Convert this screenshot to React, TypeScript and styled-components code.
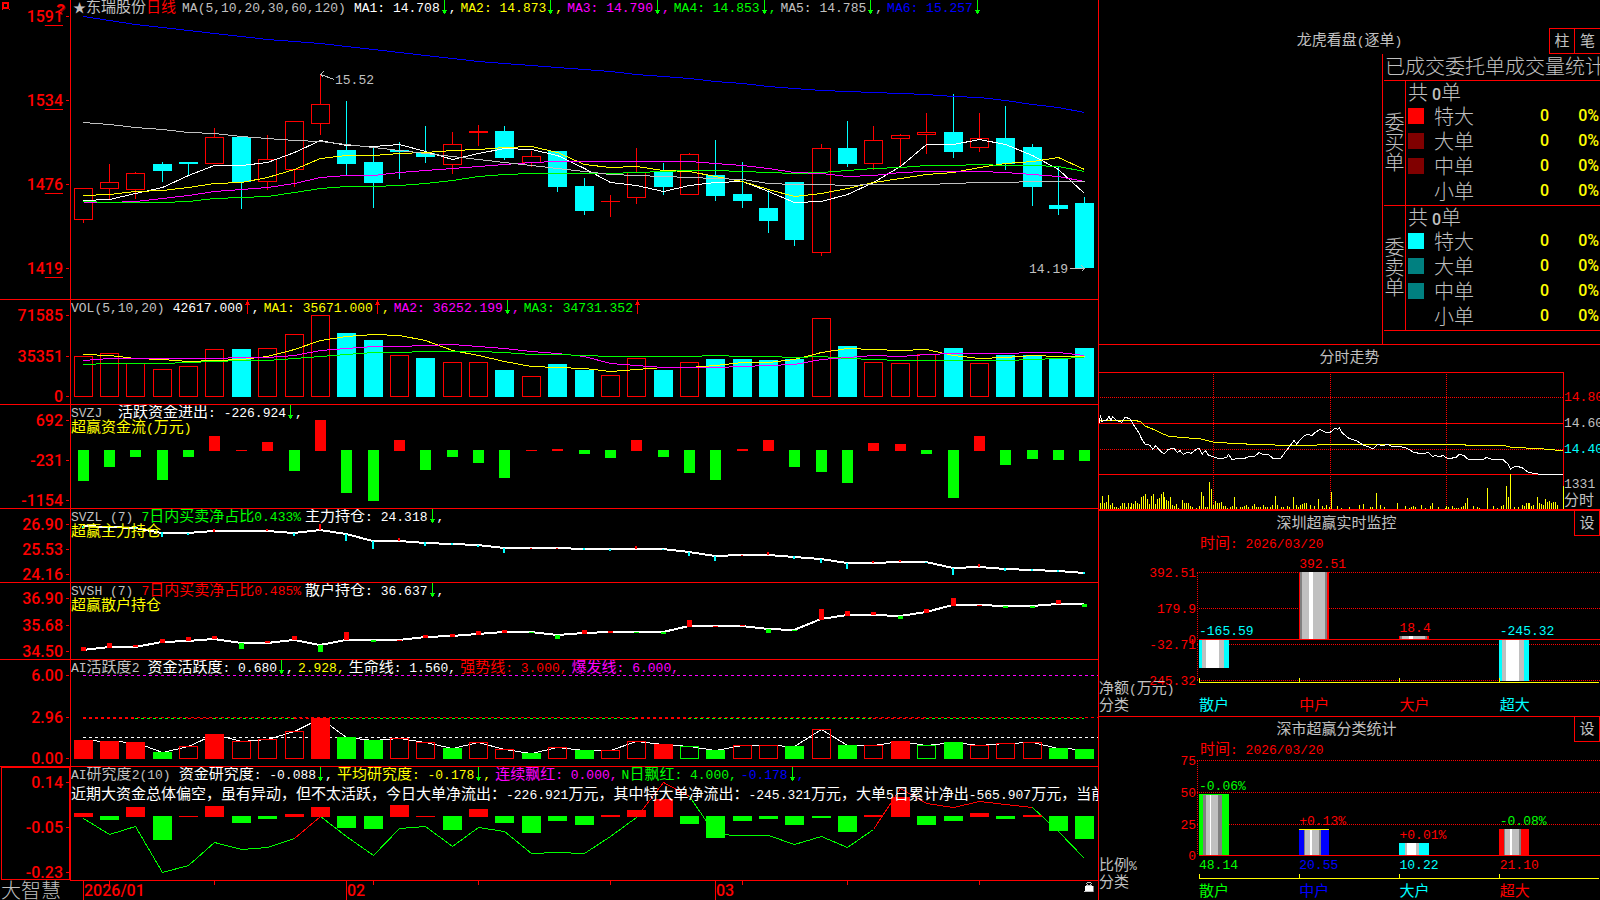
import React from "react";
import styled, { createGlobalStyle, css } from "styled-components";

const RED = "#ff0000";
const CYAN = "#00ffff";
const GREEN = "#00ff00";
const YELLOW = "#ffff00";
const MAGENTA = "#ff00ff";
const BLUE = "#0000ff";
const WHITE = "#ffffff";
const GRAY = "#c0c0c0";
const DIM = "#808080";

const Global = createGlobalStyle`
  * { box-sizing: border-box; }
  body {
    margin: 0;
    background: #000;
    color: ${GRAY};
    font: 13px/17px "Liberation Mono", "Noto Sans CJK SC", monospace;
    overflow: hidden;
  }
`;

/* ---------- text ---------- */

const Cjk = styled.span`
  font-family: "Noto Sans CJK SC", sans-serif;
  font-size: 15px;
  line-height: 0;
`;

/** Ideographs are set two pixels larger than the monospaced digits beside them. */
function Mixed({ text }: { text: string }) {
  const parts = text.split(/([\u3000-\u9fff\uff00-\uffef]+)/).filter(Boolean);
  return (
    <>
      {parts.map((p, i) =>
        /[\u3000-\u9fff\uff00-\uffef]/.test(p) ? <Cjk key={i}>{p}</Cjk> : <React.Fragment key={i}>{p}</React.Fragment>
      )}
    </>
  );
}

/* ---------- page frame ---------- */

const Screen = styled.main`
  display: grid;
  grid-template-columns: minmax(0, 1099fr) minmax(0, 501fr);
  height: 100vh;
  min-height: 640px;
`;

const Left = styled.div`
  display: grid;
  grid-template-rows: 300fr 105fr 104fr 74fr 77fr 107fr 114fr 19fr;
  min-height: 0;
  border-right: 1px solid ${RED};
`;

const Right = styled.div`
  display: grid;
  grid-template-rows: 345fr 166fr 206fr 183fr;
  min-height: 0;
`;

const Panel = styled.section`
  display: grid;
  grid-template-columns: 71px minmax(0, 1fr);
  grid-template-rows: minmax(0, 1fr);
  min-height: 0;
  position: relative;
`;

const Gutter = styled.div<{ $last?: boolean }>`
  display: grid;
  border-right: 1px solid ${RED};
  border-bottom: ${(p) => (p.$last ? "0" : `1px solid ${RED}`)};
  ${(p) => p.$last && css`padding-bottom: 1px;`}
`;

const Scale = styled.ul<{ $tall?: boolean; $focus?: boolean }>`
  display: flex;
  flex-direction: column;
  justify-content: space-between;
  list-style: none;
  margin: 0 0 0 1px;
  padding: ${(p) => (p.$tall ? "11px 0 25px" : "10px 0 2px")};
  border: 1px solid ${(p) => (p.$focus ? RED : "transparent")};
  color: ${RED};
  font: 500 16px/9px Roboto, sans-serif;
`;

const Tick = styled.li`
  display: flex;
  justify-content: flex-end;
  align-items: center;
  gap: 3px;
  height: 9px;
  &::after {
    content: "";
    width: 3px;
    height: 1px;
    background: ${RED};
  }
`;

const Cents = styled.span`
  text-decoration: underline 1px;
  text-underline-offset: 3px;
`;

const Plot = styled.div`
  display: grid;
  grid-template: minmax(0, 1fr) / minmax(0, 1fr);
  min-height: 0;
  border-bottom: 1px solid ${RED};
  overflow: hidden;
  position: relative;
  > * { grid-area: 1 / 1; }
`;

const Drawing = styled.svg`
  display: block;
  width: 100%;
  height: 100%;
  shape-rendering: crispEdges;
`;

const Overlay = styled.div`
  display: flex;
  flex-direction: column;
  align-items: flex-start;
  z-index: 1;
`;

const Legend = styled.div`
  display: flex;
  gap: 4px;
  height: 17px;
  white-space: pre;
`;

const Item = styled.span<{ $c?: string; $name?: boolean }>`
  display: inline-flex;
  align-items: center;
  color: ${(p) => p.$c || GRAY};
  padding-right: ${(p) => (p.$name ? "4px" : "0")};
`;

const Note = styled.p<{ $c: string; $gap?: boolean }>`
  margin: ${(p) => (p.$gap ? "3px 0 0" : "-2px 0 0")};
  color: ${(p) => p.$c};
  white-space: nowrap;
`;

const Text = styled.span`
  white-space: pre;
`;

const ArrowIcon = styled.svg`
  width: 9px;
  height: 14px;
  flex: none;
  align-self: flex-start;
  shape-rendering: crispEdges;
`;

function Arrow({ up }: { up?: boolean }) {
  return (
    <ArrowIcon viewBox="0 0 9 14" fill={up ? RED : GREEN} aria-hidden="true">
      {up ? (
        <path d="M4 0h1v14h-1zM3 2h3v2h-3zM2 4h5v1h-5z" />
      ) : (
        <path d="M4 0h1v14h-1zM3 11h3v2h-3zM2 10h5v1h-5z" />
      )}
    </ArrowIcon>
  );
}

type Leg = { t: string; c: string; a?: "up" | "down"; end?: string };

function Legends({ name, items }: { name: React.ReactNode; items: Leg[] }) {
  return (
    <Legend>
      {name}
      {items.map((it, i) => (
        <Item key={i} $c={it.c}>
          <Text><Mixed text={it.t} /></Text>
          {it.a && <Arrow up={it.a === "up"} />}
          <Text>{it.end ?? ","}</Text>
        </Item>
      ))}
    </Legend>
  );
}

function Name({ text }: { text: string }) {
  return <Item $name><Text><Mixed text={text} /></Text></Item>;
}

/* ---------- series ---------- */

const X = [
  83, 109, 135, 162, 188, 214, 241, 267, 294, 320, 346, 373, 399, 425, 452, 478, 504, 531, 557, 584,
  610, 636, 663, 689, 715, 742, 768, 794, 821, 847, 873, 900, 926, 953, 979, 1005, 1032, 1058, 1084,
];

/* kind, high, open/close box top, box bottom, low */
const CANDLES: [string, number, number, number, number][] = [
  ["r", 188, 188, 220, 223], ["r", 164, 182, 189, 199], ["r", 172, 173, 190, 199], ["c", 162, 164, 171, 182],
  ["c", 162, 162, 164, 175], ["r", 128, 137, 164, 164], ["c", 137, 137, 182, 209], ["r", 135, 159, 182, 190],
  ["r", 121, 121, 170, 187], ["r", 75, 104, 124, 135], ["c", 101, 150, 164, 175], ["c", 148, 162, 183, 208],
  ["c", 142, 150, 152, 179], ["c", 126, 153, 157, 163], ["r", 132, 144, 165, 174], ["r", 125, 131, 133, 146],
  ["c", 126, 131, 158, 160], ["r", 151, 156, 163, 167], ["c", 151, 151, 187, 192], ["c", 178, 186, 211, 215],
  ["r", 195, 201, 202, 217], ["r", 148, 172, 198, 204], ["c", 163, 171, 187, 195], ["r", 153, 154, 195, 195],
  ["c", 140, 175, 196, 201], ["c", 162, 194, 201, 208], ["c", 189, 208, 221, 233], ["c", 182, 182, 240, 246],
  ["r", 144, 148, 253, 256], ["c", 121, 148, 164, 167], ["r", 126, 140, 164, 170], ["r", 134, 135, 139, 167],
  ["r", 113, 132, 135, 154], ["c", 94, 132, 152, 158], ["r", 113, 138, 148, 152], ["c", 106, 138, 164, 170],
  ["c", 144, 147, 187, 206], ["c", 167, 205, 209, 215], ["c", 197, 203, 268, 268],
];

const MA: [string, number[]][] = [
  [WHITE, [200, 199, 193, 187, 175, 165, 165, 162, 152, 140, 145, 146, 144, 151, 159, 153, 148, 149, 155, 168, 182, 185, 191, 185, 182, 181, 191, 202, 201, 194, 182, 166, 144, 144, 139, 144, 155, 169, 193]],
  [YELLOW, [195, 194, 191, 190, 187, 183, 182, 177, 169, 158, 155, 155, 153, 152, 150, 149, 147, 146, 152, 164, 167, 166, 170, 171, 176, 181, 189, 196, 193, 188, 182, 178, 174, 172, 167, 163, 161, 157, 169]],
  [MAGENTA, [202, 202, 201, 198, 195, 191, 189, 187, 183, 177, 175, 175, 172, 170, 168, 166, 164, 162, 161, 161, 161, 161, 161, 161, 163, 165, 168, 172, 173, 176, 175, 172, 171, 171, 171, 172, 174, 176, 181]],
  [GREEN, [201, 202, 202, 202, 201, 198, 197, 196, 192, 188, 186, 186, 185, 183, 180, 176, 174, 173, 173, 173, 173, 172, 171, 170, 170, 171, 172, 173, 172, 170, 168, 167, 165, 165, 164, 165, 165, 166, 171]],
  [GRAY, [122, 124, 127, 129, 132, 133, 136, 138, 140, 141, 144, 147, 150, 153, 156, 159, 162, 165, 168, 171, 174, 175, 176, 177, 178, 179, 183, 184, 184, 185, 184, 184, 184, 183, 182, 182, 181, 181, 181]],
  [BLUE, [16, 20, 24, 27, 30, 33, 36, 39, 41, 43, 46, 49, 52, 55, 58, 61, 63, 65, 67, 69, 71, 74, 76, 78, 81, 83, 86, 88, 90, 91, 92, 93, 94, 96, 97, 100, 104, 107, 112]],
];

const VOL_KIND = "rrrrrrcrrrccrcrrcrccrrcrccccrcrrrcrcccc";
const VOL = [356, 353, 363, 369, 366, 349, 349, 348, 334, 315, 333, 340, 355, 358, 362, 362, 370, 376, 364, 370, 375, 358, 370, 362, 359, 359, 360, 359, 318, 346, 362, 363, 354, 348, 363, 355, 355, 358, 348];
const VOL_MA: [string, number[]][] = [
  [YELLOW, [354, 355, 358, 359, 361, 360, 359, 356, 349, 340, 336, 334, 335, 340, 350, 355, 361, 366, 367, 368, 371, 369, 367, 367, 365, 362, 362, 359, 352, 348, 349, 350, 349, 355, 358, 357, 355, 356, 356]],
  [MAGENTA, [360, 358, 358, 358, 358, 358, 357, 357, 355, 350, 348, 346, 346, 345, 344, 346, 348, 351, 353, 356, 363, 365, 367, 367, 367, 366, 365, 364, 359, 357, 355, 356, 354, 353, 353, 353, 352, 352, 355]],
  [GREEN, [364, 363, 363, 363, 362, 361, 360, 360, 358, 356, 354, 352, 352, 351, 351, 351, 352, 354, 354, 355, 356, 356, 356, 356, 355, 356, 356, 357, 356, 358, 359, 360, 360, 360, 360, 360, 359, 358, 357]],
];

/* bars hang from or stand on the zero line */
const FLOW = [481, 467, 457, 480, 457, 436, 450, 442, 471, 420, 493, 501, 440, 470, 457, 463, 478, 450, 449, 454, 458, 440, 457, 473, 480, 449, 440, 467, 472, 483, 443, 444, 454, 498, 436, 465, 459, 460, 461];

const MAIN = [526, 527, 528, 533, 533, 531, 531, 531, 533, 530, 534, 541, 541, 543, 544, 545, 548, 548, 548, 549, 549, 549, 549, 552, 556, 555, 555, 557, 559, 563, 563, 562, 562, 568, 567, 569, 570, 571, 573];
const MAIN_TICKS: [string, number, number, number][] = [
  ["c", 0, 526, 529], ["c", 1, 528, 531], ["c", 2, 527, 529], ["c", 3, 532, 537], ["c", 4, 533, 535], ["r", 5, 529, 532],
  ["r", 7, 529, 531], ["c", 8, 533, 536], ["r", 9, 524, 530], ["c", 10, 534, 541], ["c", 11, 541, 549], ["r", 12, 538, 541],
  ["c", 13, 542, 546], ["c", 14, 543, 545], ["c", 15, 545, 547], ["c", 16, 548, 553], ["r", 17, 548, 549], ["r", 18, 548, 549],
  ["c", 19, 548, 550], ["c", 20, 549, 551], ["r", 21, 546, 549], ["c", 22, 549, 550], ["c", 23, 552, 556], ["c", 24, 556, 561],
  ["r", 25, 555, 556], ["r", 26, 552, 555], ["c", 27, 556, 559], ["c", 28, 559, 563], ["c", 29, 563, 569], ["r", 30, 561, 563],
  ["r", 31, 560, 562], ["c", 32, 562, 563], ["c", 33, 568, 575], ["r", 34, 564, 567], ["c", 35, 568, 571], ["c", 36, 569, 571],
  ["c", 37, 570, 572], ["c", 38, 572, 574],
];

const RETAIL = [650, 647, 647, 642, 641, 639, 643, 643, 640, 645, 640, 640, 640, 637, 636, 634, 632, 632, 635, 633, 632, 632, 632, 626, 626, 626, 629, 630, 619, 615, 615, 616, 612, 605, 605, 606, 606, 604, 604];
const RETAIL_TICKS: [string, number, number, number][] = [
  ["r", 0, 647, 651], ["r", 1, 643, 648], ["r", 2, 645, 647], ["r", 3, 639, 643], ["r", 4, 637, 641], ["r", 5, 636, 639],
  ["g", 6, 643, 649], ["r", 7, 641, 643], ["r", 8, 636, 640], ["g", 9, 645, 652], ["r", 10, 632, 640], ["g", 11, 640, 642],
  ["r", 12, 640, 641], ["r", 13, 635, 638], ["r", 14, 634, 637], ["r", 15, 631, 635], ["r", 16, 630, 633], ["g", 17, 632, 633],
  ["g", 18, 635, 639], ["r", 19, 630, 634], ["r", 20, 631, 633], ["g", 21, 632, 633], ["g", 22, 632, 634], ["r", 23, 620, 627],
  ["r", 24, 626, 627], ["r", 25, 625, 626], ["g", 26, 629, 633], ["g", 27, 630, 631], ["r", 28, 609, 620], ["r", 29, 611, 616],
  ["r", 30, 612, 615], ["g", 31, 616, 619], ["r", 32, 609, 613], ["r", 33, 598, 606], ["r", 34, 605, 606], ["g", 35, 606, 608],
  ["g", 36, 606, 608], ["r", 37, 600, 604], ["g", 38, 604, 607],
];

/* upper case: filled, lower case: outlined */
const ACT_KIND = "RRRGrRrrrRGGrrGrrGrGrrRgGrrGrGrRgGrrrGG";
const ACT = [740, 741, 742, 752, 746, 734, 741, 739, 731, 718, 737, 740, 738, 742, 748, 742, 749, 753, 747, 750, 750, 741, 744, 746, 750, 745, 745, 746, 729, 745, 745, 741, 745, 742, 745, 743, 742, 748, 749];

const STUDY = [813, 820, 807, 840, 816, 806, 823, 819, 814, 807, 828, 829, 805, 816, 830, 809, 823, 833, 821, 825, 815, 810, 799, 824, 838, 821, 819, 825, 818, 832, 815, 797, 825, 821, 813, 819, 815, 831, 839];
const STUDY_LINE = [818, 834, 826, 872, 865, 842, 849, 847, 838, 816, 836, 855, 828, 826, 846, 827, 831, 853, 852, 853, 836, 817, 782, 796, 834, 835, 835, 844, 836, 847, 829, 788, 803, 807, 801, 804, 807, 831, 858];
const STUDY_RED: [number, number][] = [[8, 9], [21, 23], [30, 36]];

const hue = (k: string) => ({ r: RED, c: CYAN, g: GREEN }[k.toLowerCase()] as string);
const pts = (ys: number[], from = 0) => ys.map((y, i) => `${X[i + from] + 0.5},${y + 0.5}`).join(" ");

function Line({ ys, c, w = 1, from = 0 }: { ys: number[]; c: string; w?: number; from?: number }) {
  return <polyline points={pts(ys, from)} fill="none" stroke={c} strokeWidth={w} />;
}

function Bar({ x, top, bottom, w, c, hollow }: { x: number; top: number; bottom: number; w: number; c: string; hollow?: boolean }) {
  const left = x - (w - 1) / 2;
  return hollow && bottom - top > 1 ? (
    <rect x={left + 0.5} y={top + 0.5} width={w - 1} height={bottom - top - 1} fill="none" stroke={c} />
  ) : (
    <rect x={left} y={top} width={w} height={bottom - top} fill={c} />
  );
}

function SignBars({ data, zero, w }: { data: number[]; zero: number; w: number }) {
  return (
    <>
      {data.map((v, i) =>
        v > zero ? (
          <Bar key={i} x={X[i]} top={zero} bottom={v} w={w} c={GREEN} />
        ) : (
          <Bar key={i} x={X[i]} top={v} bottom={zero + 1} w={w} c={RED} />
        )
      )}
    </>
  );
}

function Canvas({ y, h, children }: { y: number; h: number; children: React.ReactNode }) {
  return (
    <Drawing viewBox={`71 ${y} 1027 ${h}`} preserveAspectRatio="none" aria-hidden="true">
      {children}
    </Drawing>
  );
}

function Axis({ labels, tall, focus }: { labels: React.ReactNode[]; tall?: boolean; focus?: boolean }) {
  return (
    <Gutter $last={focus}>
      <Scale $tall={tall} $focus={focus}>
        {labels.map((l, i) => <Tick key={i}><span>{l}</span></Tick>)}
      </Scale>
    </Gutter>
  );
}

/* ---------- left side ---------- */

const StarName = styled(Item)`
  padding: 0 2px;
`;

const Period = styled(Text)`
  color: ${RED};
`;

const PriceMark = styled.span<{ $end?: boolean }>`
  position: absolute;
  ${(p) => (p.$end ? css`right: 30px; bottom: 21px;` : css`left: 264px; top: 72px;`)}
`;

const CornerButton = styled.button`
  position: absolute;
  left: 2px;
  top: 2px;
  width: 8px;
  height: 8px;
  padding: 0;
  border: 0;
  background: none;
  svg { display: block; }
`;

const HelpButton = styled.button`
  position: absolute;
  left: 56px;
  top: 1px;
  padding: 0;
  border: 0;
  background: none;
  color: ${RED};
  font: bold 15px/15px "Liberation Sans", sans-serif;
  text-shadow: 1px 1px #800000;
`;

function PricePanel() {
  return (
    <Panel>
      <Axis tall labels={["15,91", "15,34", "14,76", "14,19"].map((s) => {
        const [a, b] = s.split(",");
        return <>{a}<Cents>{b}</Cents></>;
      })} />
      <Plot>
        <Canvas y={0} h={299}>
          {CANDLES.map(([k, hi, t, b, lo], i) => (
            <g key={i} fill={hue(k)}>
              {hi < t && <rect x={X[i]} y={hi} width={1} height={t - hi} />}
              {lo > b && <rect x={X[i]} y={b} width={1} height={lo - b} />}
              <Bar x={X[i]} top={t} bottom={b} w={19} c={hue(k)} hollow={k === "r"} />
            </g>
          ))}
          {MA.map(([c, ys]) => <Line key={c} c={c} ys={ys} />)}
          <path d="M334.500 79.500L320.500 74.500M323.500 71.500L320.500 74.500L323.500 77.500" fill="none" stroke={GRAY} />
          <path d="M1070 268.500H1084.500M1081.500 265.500L1084.500 268.500L1081.500 271.500" fill="none" stroke={GRAY} />
        </Canvas>
        <Overlay>
          <Legends
            name={
              <>
                <StarName>
                  <Text><Mixed text="★东瑞股份" /></Text>
                  <Period><Mixed text="日线" /></Period>
                </StarName>
                <Name text="MA(5,10,20,30,60,120)" />
              </>
            }
            items={[
              { t: "MA1: 14.708", c: WHITE, a: "down" },
              { t: "MA2: 14.873", c: YELLOW, a: "down" },
              { t: "MA3: 14.790", c: MAGENTA, a: "down" },
              { t: "MA4: 14.853", c: GREEN, a: "down" },
              { t: "MA5: 14.785", c: GRAY, a: "down" },
              { t: "MA6: 15.257", c: BLUE, a: "down", end: "" },
            ]}
          />
        </Overlay>
        <PriceMark>15.52</PriceMark>
        <PriceMark $end>14.19</PriceMark>
      </Plot>
      <CornerButton aria-label="窗口">
        <svg width="8" height="8" shapeRendering="crispEdges" aria-hidden="true">
          <path d="M0 0h7v7h-7zM2 2v3h3v-3z" fill={RED} fillRule="evenodd" />
          <path d="M0 7h1v1h-1zM7 7h1v1h-1z" fill={RED} />
        </svg>
      </CornerButton>
      <HelpButton>?</HelpButton>
    </Panel>
  );
}

function VolumePanel() {
  return (
    <Panel>
      <Axis labels={["71585", "35351", "0"]} />
      <Plot>
        <Canvas y={300} h={104}>
          {VOL.map((v, i) => <Bar key={i} x={X[i]} top={v} bottom={397} w={19} c={hue(VOL_KIND[i])} hollow={VOL_KIND[i] === "r"} />)}
          {VOL_MA.map(([c, ys]) => <Line key={c} c={c} ys={ys} />)}
        </Canvas>
        <Overlay>
          <Legends
            name={<Name text="VOL(5,10,20)" />}
            items={[
              { t: "42617.000", c: WHITE, a: "up" },
              { t: "MA1: 35671.000", c: YELLOW, a: "up" },
              { t: "MA2: 36252.199", c: MAGENTA, a: "down" },
              { t: "MA3: 34731.352", c: GREEN, a: "up", end: "" },
            ]}
          />
        </Overlay>
      </Plot>
    </Panel>
  );
}

function FlowPanel() {
  return (
    <Panel>
      <Axis labels={["692", "-231", "-1154"]} />
      <Plot>
        <Canvas y={405} h={103}>
          <SignBars data={FLOW} zero={450} w={11} />
        </Canvas>
        <Overlay>
          <Legends name={<Name text="SVZJ " />} items={[{ t: "活跃资金进出: -226.924", c: WHITE, a: "down" }]} />
          <Note $c={YELLOW}><Mixed text="超赢资金流(万元)" /></Note>
        </Overlay>
      </Plot>
    </Panel>
  );
}

function HoldPanel({ y, h, labels, name, ratio, ratioColor, legend, note, line, ticks, wide }: {
  y: number; h: number; labels: string[]; name: string; ratio: string; ratioColor: string; legend: string; note: string;
  line: number[]; ticks: [string, number, number, number][]; wide: number;
}) {
  return (
    <Panel>
      <Axis labels={labels} />
      <Plot>
        <Canvas y={y} h={h}>
          <polyline points={line.map((v, i) => `${X[i]},${v}`).join(" ")} fill="none" stroke={WHITE} strokeWidth={2} />
          {ticks.map(([k, i, t, b]) => (
            <rect key={i} x={X[i] - Math.floor(wide / 2)} y={t} width={wide} height={b - t} fill={hue(k)} />
          ))}
        </Canvas>
        <Overlay>
          <Legends
            name={
              <>
                <Name text={name} />
                <Item $c={ratioColor}><Text><Mixed text={ratio} /></Text></Item>
              </>
            }
            items={[{ t: legend, c: WHITE, a: "down" }]}
          />
          <Note $c={YELLOW}><Mixed text={note} /></Note>
        </Overlay>
      </Plot>
    </Panel>
  );
}

function ActivityPanel() {
  const strong: [number, number, string][] = [
    [83, 135, RED], [135, 188, GREEN], [188, 213, RED], [213, 294, GREEN], [294, 320, RED], [320, 635, GREEN],
    [635, 688, RED], [688, 873, GREEN], [873, 926, RED], [926, 1084, GREEN],
  ];
  return (
    <Panel>
      <Axis labels={["6.00", "2.96", "0.00"]} />
      <Plot>
        <Canvas y={660} h={106}>
          <g strokeDasharray="3 3">
            <path d="M83 675.500H1098" stroke={MAGENTA} />
            <path d="M83 717.500H1098" stroke={RED} />
            {strong.map(([a, b, c]) => <path key={a} d={`M${a} 718.500H${b}`} stroke={c} />)}
            <path d="M83 737.500H1098" stroke={WHITE} />
          </g>
          <Line ys={ACT} c={WHITE} />
          {ACT.map((v, i) => (
            <Bar key={i} x={X[i]} top={v} bottom={759} w={19} c={hue(ACT_KIND[i])} hollow={/[rg]/.test(ACT_KIND[i])} />
          ))}
        </Canvas>
        <Overlay>
          <Legends
            name={<Name text="AI活跃度2" />}
            items={[
              { t: "资金活跃度: 0.680", c: WHITE, a: "down" },
              { t: "2.928", c: YELLOW },
              { t: "生命线: 1.560", c: WHITE },
              { t: "强势线: 3.000", c: RED },
              { t: "爆发线: 6.000", c: MAGENTA },
            ]}
          />
        </Overlay>
      </Plot>
    </Panel>
  );
}

function StudyPanel() {
  return (
    <Panel>
      <Axis focus labels={["0.14", "-0.05", "-0.23"]} />
      <Plot>
        <Canvas y={767} h={113}>
          <Line ys={STUDY_LINE} c={GREEN} />
          {STUDY_RED.map(([a, b]) => <Line key={a} ys={STUDY_LINE.slice(a, b + 1)} from={a} c={RED} />)}
          <SignBars data={STUDY} zero={816} w={19} />
        </Canvas>
        <Overlay>
          <Legends
            name={<Name text="AI研究度2(10)" />}
            items={[
              { t: "资金研究度: -0.088", c: WHITE, a: "down" },
              { t: "平均研究度: -0.178", c: YELLOW, a: "down" },
              { t: "连续飘红: 0.000", c: MAGENTA },
              { t: "N日飘红: 4.000", c: GREEN },
              { t: "-0.178", c: BLUE, a: "down" },
            ]}
          />
          <Note $c={WHITE} $gap>
            <Mixed text="近期大资金总体偏空，虽有异动，但不太活跃，今日大单净流出：-226.921万元，其中特大单净流出：-245.321万元，大单5日累计净出-565.907万元，当前" />
          </Note>
        </Overlay>
      </Plot>
    </Panel>
  );
}

const Footer = styled.footer`
  display: grid;
  grid-template-columns: 71px minmax(0, 1fr);
  grid-template-rows: minmax(0, 1fr);
  min-height: 0;
`;

const Brand = styled.span`
  padding-left: 1px;
  font: 300 20px/18px "Noto Sans CJK SC", sans-serif;
  white-space: nowrap;
`;

const Months = styled.div`
  display: grid;
  grid-template: minmax(0, 1fr) / 13fr 263fr 369fr 369fr 13fr;
  > svg { grid-area: 1 / 1 / 2 / 6; }
`;

const Month = styled.span<{ $col: number }>`
  grid-area: 1 / ${(p) => p.$col};
  color: ${RED};
  font: 500 16px/20px Roboto, sans-serif;
`;

const LockButton = styled.button`
  grid-area: 1 / 4 / 2 / 6;
  justify-self: end;
  align-self: start;
  margin-right: 3px;
  padding: 0;
  border: 0;
  background: none;
  svg { display: block; }
`;

function DateAxis() {
  return (
    <Footer>
      <Brand>大智慧</Brand>
      <Months>
        <Canvas y={881} h={19}>
          {[83, 346, 715].map((x) => <rect key={x} x={x} y={881} width={1} height={19} fill={RED} />)}
          {[109, 214, 373, 478, 610, 742, 847, 979].map((x) => <rect key={x} x={x} y={881} width={1} height={4} fill={RED} />)}
        </Canvas>
        <Month $col={2}>2026/01</Month>
        <Month $col={3}>02</Month>
        <Month $col={4}>03</Month>
        <LockButton aria-label="锁定">
          <svg width="11" height="12" shapeRendering="crispEdges" aria-hidden="true">
            <path d="M3 1h4v1h-4zM2 2h1v1h-1zM7 2h1v1h-1zM3 3h1v1h-1zM6 3h1v1h-1z" fill={GRAY} />
            <path d="M1 5h8v5h-8z" fill={WHITE} />
            <path d="M9 5h1v6h-10v-1h9z" fill={DIM} />
            <path d="M2 4h6v1h-6zM0 10h9v1h-9z" fill={GRAY} />
          </svg>
        </LockButton>
      </Months>
    </Footer>
  );
}

/* ---------- right side ---------- */

const Card = styled.section<{ $thick?: boolean; $open?: boolean }>`
  display: flex;
  flex-direction: column;
  position: relative;
  min-height: 0;
  border-bottom: ${(p) => (p.$open ? "0" : p.$thick ? `2px solid ${RED}` : `1px solid ${RED}`)};
`;

const Title = styled.h2`
  margin: 0;
  font: inherit;
  text-align: center;
  white-space: nowrap;
`;

const BoxButton = styled.button`
  width: 26px;
  height: 26px;
  padding: 0 0 3px;
  border: 1px solid ${RED};
  background: #000;
  color: ${GRAY};
  font: 15px/15px "Noto Sans CJK SC", sans-serif;
`;

const OrderHead = styled.header`
  display: grid;
  grid-template-columns: minmax(0, 1fr) auto minmax(0, 1fr);
  align-items: start;
  height: 54px;
  padding-top: 28px;
  line-height: 28px;
  flex: none;
`;

const ButtonPair = styled.div`
  display: flex;
  justify-self: end;
  ${BoxButton} + ${BoxButton} {
    margin-left: -1px;
    border-right: 0;
  }
`;

const OrderBody = styled.div`
  flex: 1;
  align-self: flex-end;
  width: 218px;
  padding-left: 1px;
  border-left: 1px solid ${RED};
  overflow: hidden;
`;

const OrderTable = styled.table`
  width: 100%;
  table-layout: fixed;
  border-spacing: 0;
  border-bottom: 1px solid ${RED};
  font: 300 20px/20px "Noto Sans CJK SC", sans-serif;
  caption {
    height: 26px;
    padding-left: 1px;
    text-align: left;
    white-space: nowrap;
    line-height: 24px;
  }
  caption span { display: block; width: 0; }
  tr { height: 25px; }
  td, th {
    height: 25px;
    padding: 0 0 3px;
    font-weight: inherit;
    text-align: left;
    vertical-align: middle;
    line-height: 20px;
  }
  tr:first-child > * { border-top: 1px solid ${RED}; }
`;

const SideHead = styled.th`
  && {
    padding-right: 2px;
    border-right: 1px solid ${RED};
    writing-mode: vertical-rl;
    line-height: 19px;
    text-align: center;
  }
`;

const TextCell = styled.td`
  && { padding-left: 2px; }
`;

const Swatch = styled.i<{ $c: string }>`
  display: block;
  width: 16px;
  height: 16px;
  margin: 0 0 0 2px;
  background: ${(p) => p.$c};
`;

const Figure = styled.td`
  && {
    padding-right: 1px;
    color: ${YELLOW};
    font: 500 16px/20px Roboto, sans-serif;
    text-align: right;
    white-space: nowrap;
  }
`;

const Strong = styled.b`
  font: 500 16px/0 Roboto, sans-serif;
`;

function OrderGroup({ side, colors }: { side: string; colors: string[] }) {
  return (
    <tbody>
      <tr>
        <SideHead scope="rowgroup" rowSpan={5}>{side}</SideHead>
        <TextCell colSpan={4}>共<Strong> 0</Strong>单</TextCell>
      </tr>
      {["特大", "大单", "中单", "小单"].map((n, i) => (
        <tr key={n}>
          <td><Swatch $c={colors[i]} /></td>
          <TextCell>{n}</TextCell>
          <Figure>0</Figure>
          <Figure>0%</Figure>
        </tr>
      ))}
    </tbody>
  );
}

function OrderCard() {
  return (
    <Card>
      <OrderHead>
        <span />
        <Title><Mixed text="龙虎看盘(逐单)" /></Title>
        <ButtonPair>
          <BoxButton>柱</BoxButton>
          <BoxButton>笔</BoxButton>
        </ButtonPair>
      </OrderHead>
      <OrderBody>
        <OrderTable>
          <caption><span>已成交委托单成交量统计</span></caption>
          <colgroup>
            <col width="22" />
            <col width="26" />
            <col />
            <col width="44" />
            <col width="50" />
          </colgroup>
          <OrderGroup side="委买单" colors={[RED, "#800000", "#800000", "#000000"]} />
          <OrderGroup side="委卖单" colors={[CYAN, "#008080", "#008080", "#000000"]} />
        </OrderTable>
      </OrderBody>
    </Card>
  );
}

/* intraday curves, three units to the pixel */
const TREND = "28,250 31,226 36,245 43,240 50,240 57,228 63,243 68,230 80,242 95,247 105,232 120,236 128,250 138,265 148,280 155,297 165,312 180,316 188,328 197,317 208,330 222,342 235,328 252,325 262,338 270,332 280,343 292,337 303,340 320,327 328,326 336,343 346,332 355,345 375,352 390,357 410,352 416,343 426,360 440,355 460,357 480,348 495,348 508,337 520,345 536,344 550,356 572,355 585,337 600,318 612,302 620,312 630,300 645,286 655,282 665,288 675,278 690,268 708,278 722,276 735,264 742,268 748,263 756,278 778,296 800,302 820,316 835,320 848,327 862,314 880,316 895,313 905,320 930,319 950,325 970,336 995,342 1015,337 1028,350 1036,346 1044,350 1060,347 1075,357 1100,351 1108,343 1122,347 1133,357 1180,358 1190,352 1205,358 1240,360 1255,373 1262,387 1275,379 1295,382 1315,397 1345,402 1370,402 1419,403";
const AVERAGE = "28,243 70,240 120,240 150,244 165,258 190,268 215,280 235,288 280,293 330,296 370,306 440,311 555,315 680,315 690,313 900,313 1120,313 1130,316 1245,317 1265,322 1350,326 1395,330 1419,331";
const TURNOVER: number[] = [
  31, 488, 38, 468, 43, 488, 49, 486, 55, 465, 61, 495, 67, 489, 73, 501, 79, 501, 85, 505, 91, 498, 97, 489, 103, 489, 109, 501,
  115, 489, 121, 501, 124, 489, 130, 492, 136, 483, 142, 489, 148, 492, 154, 471, 160, 468, 166, 462, 172, 477, 178, 492,
  184, 468, 190, 462, 196, 492, 202, 477, 208, 474, 214, 462, 220, 456, 223, 471, 229, 480, 235, 483, 241, 471, 247, 495,
  253, 498, 259, 492, 265, 504, 277, 480, 283, 489, 289, 489, 295, 489, 301, 498, 307, 501, 319, 504, 328, 498, 334, 456,
  340, 468, 346, 501, 352, 501, 358, 426, 364, 447, 370, 495, 376, 483, 382, 489, 388, 489, 394, 486, 400, 498, 406, 498,
  412, 504, 421, 501, 427, 498, 433, 471, 439, 501, 451, 501, 457, 501, 463, 498, 469, 495, 475, 501, 487, 498, 493, 492,
  499, 501, 505, 501, 511, 501, 520, 495, 526, 501, 532, 501, 541, 501, 547, 495, 556, 468, 562, 495, 574, 501, 580, 501,
  592, 498, 598, 501, 610, 471, 619, 495, 625, 501, 631, 495, 637, 492, 643, 489, 649, 489, 661, 495, 673, 498, 685, 477,
  697, 498, 703, 504, 709, 495, 718, 501, 724, 456, 742, 498, 754, 504, 778, 501, 808, 495, 820, 492, 841, 501, 847, 501,
  859, 459, 871, 495, 883, 501, 922, 489, 946, 498, 958, 504, 964, 502, 970, 498, 976, 502, 994, 495, 1006, 504, 1021, 498,
  1027, 489, 1045, 501, 1066, 504, 1069, 498, 1075, 501, 1087, 498, 1093, 504, 1099, 504, 1105, 504, 1114, 501, 1120, 498,
  1126, 489, 1132, 474, 1150, 498, 1162, 501, 1168, 504, 1192, 444, 1210, 498, 1222, 504, 1234, 498, 1240, 495, 1249, 438,
  1255, 471, 1261, 402, 1273, 501, 1285, 501, 1297, 495, 1303, 498, 1309, 489, 1315, 489, 1318, 489, 1324, 498, 1330, 495,
  1342, 471, 1348, 489, 1354, 492, 1360, 495, 1366, 477, 1372, 486, 1378, 483, 1384, 489, 1390, 486, 1396, 486, 1402, 495,
  1420, 438,
];

const TrendTitle = styled(Title)`
  height: 27px;
  line-height: 28px;
  flex: none;
`;

const TrendBody = styled.div`
  display: grid;
  grid-template: minmax(0, 1fr) / minmax(0, 1fr) 36px;
  flex: 1;
  min-height: 0;
`;

const TrendSide = styled.ul`
  list-style: none;
  margin: 0;
  padding: 17px 0 0;
  overflow: hidden;
  white-space: nowrap;
`;

const TrendPrice = styled.li<{ $c: string }>`
  height: 26px;
  color: ${(p) => p.$c};
`;

const TrendFoot = styled.ul`
  list-style: none;
  margin: 0;
  padding: 9px 0 0;
`;

function TrendCard() {
  return (
    <Card $thick>
      <TrendTitle><Mixed text="分时走势" /></TrendTitle>
      <TrendBody>
        <Drawing viewBox="27 96 1395 411" preserveAspectRatio="none" aria-hidden="true">
          <g fill="none" stroke={RED} strokeWidth="3">
            <path d="M27 97.500H1420.500V507M27 250.500H1420M27 403.500H1420" />
            <path strokeDasharray="3 3" d="M30 172.500H1420M30 328.500H1420M370.500 102V507M721.500 102V507M1069.500 102V507" />
          </g>
          <polyline points={AVERAGE} fill="none" stroke={YELLOW} strokeWidth="3" />
          <polyline points={TREND} fill="none" stroke={WHITE} strokeWidth="3" />
          {TURNOVER.map((x, i) =>
            i % 2 === 0 ? <rect key={i} x={Math.floor(x / 3) * 3} y={TURNOVER[i + 1]} width="3" height={507 - TURNOVER[i + 1]} fill={YELLOW} /> : null
          )}
        </Drawing>
        <TrendSide>
          <TrendPrice $c={RED}>14.80</TrendPrice>
          <TrendPrice $c={GRAY}>14.60</TrendPrice>
          <TrendPrice $c={CYAN}>14.40</TrendPrice>
          <li>
            <TrendFoot>
              <li>1331</li>
              <li><Mixed text="分时" /></li>
            </TrendFoot>
          </li>
        </TrendSide>
      </TrendBody>
    </Card>
  );
}

const StatHead = styled.header`
  display: grid;
  grid-template-columns: minmax(0, 1fr) 26px;
  height: 24px;
  line-height: 28px;
  flex: none;
  ${BoxButton} { margin-top: -1px; }
`;

const StatHeadFlush = styled(StatHead)`
  ${BoxButton} { margin-top: 0; height: 25px; border-top: 0; }
`;

const StatTime = styled.p`
  margin: 0;
  padding-left: 101px;
  height: 18px;
  line-height: 20px;
  color: ${RED};
  flex: none;
`;

const StatPlot = styled.div`
  position: relative;
  flex: 1;
  min-height: 0;
`;

const ScaleMark = styled.span<{ $y: number }>`
  position: absolute;
  right: calc(100% - 97px);
  top: ${(p) => p.$y}%;
  margin-top: -8px;
  color: ${RED};
`;

const ValueMark = styled.span<{ $i: number; $y: number; $c: string }>`
  position: absolute;
  left: calc(100px + (100% - 100px) / 4 * ${(p) => p.$i});
  top: ${(p) => p.$y}%;
  margin-top: -8px;
  color: ${(p) => p.$c};
`;

const Cats = styled.div<{ $tight?: boolean }>`
  display: grid;
  grid-template-columns: repeat(4, 1fr);
  height: ${(p) => (p.$tight ? "20px" : "22px")};
  line-height: 26px;
  padding-left: 100px;
  flex: none;
`;

const Cat = styled.span<{ $c: string }>`
  color: ${(p) => p.$c};
`;

const Units = styled.div<{ $high?: boolean }>`
  position: absolute;
  left: 0;
  bottom: ${(p) => (p.$high ? "8px" : "1px")};
`;

type Stripes = [number, string][];
const cyanTube: Stripes = [[3, CYAN], [4, GRAY], [13, WHITE], [5, GRAY], [5, CYAN]];
const redTube: Stripes = [[1, RED], [2, DIM], [7, GRAY], [4, WHITE], [12, GRAY], [2, DIM], [2, RED]];
const shareTube = (c: string): Stripes => [[5, c], [1, DIM], [5, GRAY], [2, WHITE], [7, GRAY], [2, DIM], [8, c]];

function Tube({ i, top, bottom, stripes, cap }: { i: number; top: number; bottom: number; stripes: Stripes; cap?: string }) {
  let x = 100 + i * 100;
  const left = x;
  return (
    <g>
      {stripes.map(([w, c], k) => {
        const r = <rect key={k} x={x} y={top} width={w} height={bottom - top} fill={c} />;
        x += w;
        return r;
      })}
      {cap && <rect x={left} y={top} width={30} height={1} fill={cap} />}
    </g>
  );
}

function NetCard() {
  const cats: [string, string][] = [["散户", CYAN], ["中户", RED], ["大户", RED], ["超大", CYAN]];
  const pc = (y: number) => (y / 141) * 100;
  return (
    <Card>
      <StatHeadFlush>
        <Title><Mixed text="深圳超赢实时监控" /></Title>
        <BoxButton>设</BoxButton>
      </StatHeadFlush>
      <StatTime><Mixed text="时间: 2026/03/20" /></StatTime>
      <StatPlot>
        <Drawing viewBox="0 0 501 141" preserveAspectRatio="none" aria-hidden="true">
          <path d="M98 19.500H501M100 55.500H501M98 91.500H501M98 127.500H501M98.500 20V127" stroke={RED} strokeDasharray="1 1" fill="none" />
          <rect x="100" y="86" width="401" height="1" fill={RED} />
          <rect x="100" y="129" width="400" height="1" fill={YELLOW} />
          <Tube i={0} top={87} bottom={115} stripes={cyanTube} />
          <Tube i={1} top={19} bottom={86} stripes={redTube} />
          <Tube i={2} top={83} bottom={86} stripes={redTube} />
          <Tube i={3} top={87} bottom={128} stripes={cyanTube} />
          {[100, 200, 300, 400].map((x) => <rect key={x} x={x} y="125" width="1" height="5" fill={YELLOW} />)}
        </Drawing>
        <ScaleMark $y={pc(20)}>392.51</ScaleMark>
        <ScaleMark $y={pc(56)}>179.9</ScaleMark>
        <ScaleMark $y={pc(87)}>0</ScaleMark>
        <ScaleMark $y={pc(92)}>-32.71</ScaleMark>
        <ScaleMark $y={pc(128)}>-245.32</ScaleMark>
        <ValueMark $i={0} $y={pc(78)} $c={CYAN}>-165.59</ValueMark>
        <ValueMark $i={1} $y={pc(11)} $c={RED}>392.51</ValueMark>
        <ValueMark $i={2} $y={pc(75)} $c={RED}>18.4</ValueMark>
        <ValueMark $i={3} $y={pc(78)} $c={CYAN}>-245.32</ValueMark>
      </StatPlot>
      <Cats>{cats.map(([n, c]) => <Cat key={n} $c={c}><Mixed text={n} /></Cat>)}</Cats>
      <Units><Mixed text="净额(万元)" /><br /><Mixed text="分类" /></Units>
    </Card>
  );
}

function ShareCard() {
  const cats: [string, string][] = [["散户", GREEN], ["中户", BLUE], ["大户", CYAN], ["超大", RED]];
  const shares = ["48.14", "20.55", "10.22", "21.10"];
  const pc = (y: number) => (y / 121) * 100;
  return (
    <Card $open>
      <StatHead>
        <Title><Mixed text="深市超赢分类统计" /></Title>
        <BoxButton>设</BoxButton>
      </StatHead>
      <StatTime><Mixed text="时间: 2026/03/20" /></StatTime>
      <StatPlot>
        <Drawing viewBox="0 0 501 121" preserveAspectRatio="none" aria-hidden="true">
          <path d="M98 1.500H501M98 33.500H501M98 65.500H501M98.500 2V96" stroke={RED} strokeDasharray="1 1" fill="none" />
          <rect x="100" y="96" width="401" height="1" fill={RED} />
          <rect x="100" y="119" width="400" height="1" fill={YELLOW} />
          <Tube i={0} top={35} bottom={96} cap={GREEN} stripes={[[4, GREEN], [3, DIM], [4, GRAY], [1, WHITE], [7, GRAY], [4, DIM], [7, GREEN]]} />
          <Tube i={1} top={70} bottom={96} cap={YELLOW} stripes={shareTube(BLUE)} />
          <Tube i={2} top={84} bottom={96} stripes={[[6, CYAN], [2, GRAY], [9, WHITE], [3, GRAY], [10, CYAN]]} />
          <Tube i={3} top={70} bottom={96} stripes={shareTube(RED)} />
          {[100, 200, 300, 400].map((x) => <rect key={x} x={x} y="115" width="1" height="5" fill={YELLOW} />)}
        </Drawing>
        <ScaleMark $y={pc(2)}>75</ScaleMark>
        <ScaleMark $y={pc(34)}>50</ScaleMark>
        <ScaleMark $y={pc(66)}>25</ScaleMark>
        <ScaleMark $y={pc(97)}>0</ScaleMark>
        <ValueMark $i={0} $y={pc(27)} $c={GREEN}>-0.06%</ValueMark>
        <ValueMark $i={1} $y={pc(62)} $c={RED}>+0.13%</ValueMark>
        <ValueMark $i={2} $y={pc(76)} $c={RED}>+0.01%</ValueMark>
        <ValueMark $i={3} $y={pc(62)} $c={GREEN}>-0.08%</ValueMark>
        {shares.map((s, i) => <ValueMark key={s} $i={i} $y={pc(106)} $c={cats[i][1]}>{s}</ValueMark>)}
      </StatPlot>
      <Cats $tight>{cats.map(([n, c]) => <Cat key={n} $c={c}><Mixed text={n} /></Cat>)}</Cats>
      <Units $high><Mixed text="比例%" /><br /><Mixed text="分类" /></Units>
    </Card>
  );
}

export default function App() {
  return (
    <>
      <Global />
      <Screen>
        <Left>
          <PricePanel />
          <VolumePanel />
          <FlowPanel />
          <HoldPanel y={509} h={73} labels={["26.90", "25.53", "24.16"]} name="SVZL (7)" ratio="7日内买卖净占比0.433%" ratioColor={GREEN}
            legend="主力持仓: 24.318" note="超赢主力持仓" line={MAIN} ticks={MAIN_TICKS} wide={2} />
          <HoldPanel y={583} h={76} labels={["36.90", "35.68", "34.50"]} name="SVSH (7)" ratio="7日内买卖净占比0.485%" ratioColor={RED}
            legend="散户持仓: 36.637" note="超赢散户持仓" line={RETAIL} ticks={RETAIL_TICKS} wide={5} />
          <ActivityPanel />
          <StudyPanel />
          <DateAxis />
        </Left>
        <Right>
          <OrderCard />
          <TrendCard />
          <NetCard />
          <ShareCard />
        </Right>
      </Screen>
    </>
  );
}
